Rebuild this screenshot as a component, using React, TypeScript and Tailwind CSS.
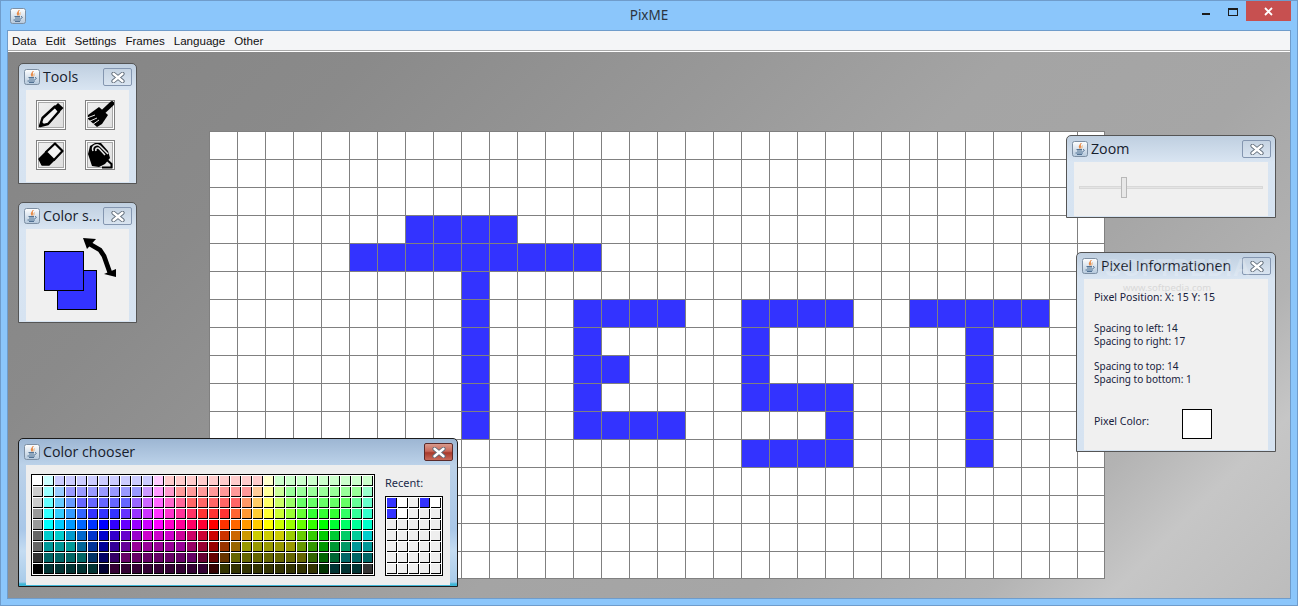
import clsx from 'clsx'
import type { ReactNode } from 'react'

const MENUS = ['Data', 'Edit', 'Settings', 'Frames', 'Language', 'Other']

const SWATCHES = [
    'fff cff ccf ccf ccf ccf ccf ccf ccf ccf ccf fcf fcc fcc fcc fcc fcc fcc fcc fcc fcc ffc cfc cfc cfc cfc cfc cfc cfc cfc cfc',
    'ccc 9ff 9cf 99f 99f 99f 99f 99f 99f 99f c9f f9f f9c f99 f99 f99 f99 f99 f99 f99 fc9 ff9 cf9 9f9 9f9 9f9 9f9 9f9 9f9 9f9 9fc',
    'ccc 6ff 6cf 69f 66f 66f 66f 66f 66f 96f c6f f6f f6c f69 f66 f66 f66 f66 f66 f96 fc6 ff6 cf6 9f6 6f6 6f6 6f6 6f6 6f6 6f9 6fc',
    '999 3ff 3cf 39f 36f 33f 33f 33f 63f 93f c3f f3f f3c f39 f36 f33 f33 f33 f63 f93 fc3 ff3 cf3 9f3 6f3 3f3 3f3 3f3 3f6 3f9 3fc',
    '999 0ff 0cf 09f 06f 03f 00f 30f 60f 90f c0f f0f f0c f09 f06 f03 f00 f30 f60 f90 fc0 ff0 cf0 9f0 6f0 3f0 0f0 0f3 0f6 0f9 0fc',
    '666 0cc 0cc 09c 06c 03c 00c 30c 60c 90c c0c c0c c0c c09 c06 c03 c00 c30 c60 c90 cc0 cc0 cc0 9c0 6c0 3c0 0c0 0c3 0c6 0c9 0cc',
    '666 099 099 099 069 039 009 309 609 909 909 909 909 909 906 903 900 930 960 990 990 990 990 990 690 390 090 093 096 099 099',
    '333 066 066 066 066 036 006 306 606 606 606 606 606 606 606 603 600 630 660 660 660 660 660 660 660 360 060 063 066 066 066',
    '000 033 033 033 033 033 003 303 303 303 303 303 303 303 303 303 300 330 330 330 330 330 330 330 330 330 030 033 033 033 333',
].map((row) => row.split(' '))

const RECENT = [
    '33f fff eee 33f fff',
    '33f fff eee eee eee',
    'eee eee eee eee eee',
    'eee eee eee eee eee',
    'eee eee eee eee eee',
    'eee eee eee eee eee',
    'eee eee eee eee eee',
].map((row) => row.split(' '))

// row -> painted columns of the "TEST" drawing
const PAINTED: Record<number, number[]> = {
    3: [7, 8, 9, 10],
    4: [5, 6, 7, 8, 9, 10, 11, 12, 13],
    5: [9],
    6: [9, 13, 14, 15, 16, 19, 20, 21, 22, 25, 26, 27, 28, 29],
    7: [9, 13, 19, 27],
    8: [9, 13, 14, 19, 27],
    9: [9, 13, 19, 20, 21, 22, 27],
    10: [9, 13, 14, 15, 16, 22, 27],
    11: [19, 20, 21, 22, 27],
}

function JavaIcon({ className }: { className?: string }) {
    return (
        <svg width="16" height="16" viewBox="0 0 16 16" className={clsx('shrink-0', className)}>
            <defs>
                <linearGradient id="javaBg" x1="0" y1="0" x2="0" y2="1">
                    <stop offset="0" stopColor="#ffffff" />
                    <stop offset="1" stopColor="#b4c8dc" />
                </linearGradient>
            </defs>
            <rect x="0.5" y="0.5" width="15" height="15" rx="2" fill="url(#javaBg)" stroke="#7d8fa3" />
            <path d="M9.5 2C7 4 10 5 8 7.5 7 6 6.5 5 9.5 2Z" fill="#e8792a" stroke="#e8792a" strokeWidth="0.6" />
            <path d="M10.5 4.5C9.5 5.5 10.5 6.5 9.5 7.5" fill="none" stroke="#f0a050" strokeWidth="0.8" />
            <path d="M4.5 8.5H10M5 10H10M11 8.5C13 8.5 12.5 10.5 10.5 10.5M3.5 12H11M5 13.5H10" fill="none" stroke="#44668a" strokeWidth="0.9" />
        </svg>
    )
}

function CloseMark() {
    return (
        <svg width="14" height="11" viewBox="0 0 14 11">
            <path d="M2.5 1.8L11.5 9.2M11.5 1.8L2.5 9.2" stroke="#5f6b78" strokeWidth="4.2" strokeLinecap="round" />
            <path d="M2.5 1.8L11.5 9.2M11.5 1.8L2.5 9.2" stroke="#ffffff" strokeWidth="2.4" strokeLinecap="round" />
        </svg>
    )
}

interface FrameProps {
    title: string
    className: string
    active?: boolean
    children: ReactNode
    contentClassName?: string
}

function InternalFrame({ title, className, active, children, contentClassName }: FrameProps) {
    return (
        <div
            className={clsx(
                'absolute box-border flex flex-col rounded-t-[5px] border',
                active
                    ? 'border-[#1b1b1b] bg-[linear-gradient(180deg,#9db6d3_0px,#bcd2e9_26px,#a9c7e8_90px,#c4dcf2_112px,#a9cbe9_143px,#3fb6d6_145px)]'
                    : 'border-[#555555] bg-[linear-gradient(180deg,#bfcfe0_0px,#d9e5f2_26px,#d6e3f1_100%)]',
                className,
            )}
        >
            <div className="flex h-[26px] shrink-0 items-center pl-[5px] pr-[4px]">
                <JavaIcon />
                <span className="ml-[3px] whitespace-nowrap font-['Open_Sans',sans-serif] text-[14.2px] leading-none text-[#17202c]">
                    {title}
                </span>
                <button
                    type="button"
                    className={clsx(
                        'ml-auto flex h-[18px] w-[29px] items-center justify-center rounded-[2px] border',
                        active
                            ? 'border-[#5a2a2a] bg-[linear-gradient(180deg,#d99a8c_0%,#c8685a_45%,#a83a2c_55%,#c86a5a_100%)]'
                            : 'border-[#8496b0] bg-[linear-gradient(180deg,#c5d3e2_0%,#d9e4f0_100%)]',
                    )}
                >
                    <CloseMark />
                </button>
            </div>
            <div className={clsx('relative mx-[7px] mb-[1px] flex-1 bg-[#f0f0f0]', contentClassName)}>{children}</div>
        </div>
    )
}

function ToolButton({ children }: { children: ReactNode }) {
    return (
        <button
            type="button"
            className="box-border h-[30px] w-[30px] border border-[#808080] bg-[linear-gradient(135deg,#f0f0f0_0%,#dedede_100%)] p-0 shadow-[inset_0_0_0_1px_#ffffff,inset_0_0_0_2px_#a8a8a8]"
        >
            <svg width="28" height="28" viewBox="1 1 28 28" className="block">
                {children}
            </svg>
        </button>
    )
}

function Swatch({ color }: { color: string }) {
    return (
        <div
            className="box-border h-[10px] w-[10px] border-b border-r border-black"
            style={{ backgroundColor: `#${color}` }}
        />
    )
}

function Canvas() {
    const cells = []
    for (let r = 0; r < 16; r++) {
        for (let c = 0; c < 32; c++) {
            const on = PAINTED[r]?.includes(c)
            cells.push(
                <div
                    key={`${r}-${c}`}
                    className={clsx(
                        'box-border border-l border-t border-[#808080]',
                        c === 31 && 'border-r',
                        r === 15 && 'border-b',
                        on ? 'bg-[#3333ff]' : 'bg-white',
                    )}
                />,
            )
        }
    }
    return <div className="grid w-[896px] grid-cols-[repeat(32,28px)] grid-rows-[repeat(16,28px)]">{cells}</div>
}

export default function App() {
    return (
        <div className="flex h-[606px] w-[1298px] flex-col overflow-hidden border border-[#6f9ccb] bg-[#8bc6fb] font-['Noto_Sans',sans-serif]">
            {/* title bar */}
            <div className="relative flex h-[29px] shrink-0 items-start justify-center">
                <JavaIcon className="absolute left-[9px] top-[7px]" />
                <span className="mt-[5px] text-[13.5px] leading-[18px] text-[#2a3440]">PixME</span>
                <div className="absolute right-[6px] top-0 flex items-start">
                    <div className="mr-[18px] mt-[12px] h-[2px] w-[8px] bg-[#1c1c1c]" />
                    <div className="mr-[8px] mt-[7px] h-[8px] w-[10px] border border-t-2 border-[#1c1c1c]" />
                    <div className="flex h-[20px] w-[45px] items-center justify-center bg-[#c75050]">
                        <svg width="9" height="9" viewBox="0 0 9 9">
                            <path d="M1 1L8 8M8 1L1 8" stroke="#fff" strokeWidth="1.8" />
                        </svg>
                    </div>
                </div>
            </div>

            {/* client area */}
            <div className="mx-[6px] mb-[6px] flex min-h-0 flex-1 flex-col border border-[#6f9ccb]">
                <div className="flex h-[20px] shrink-0 items-center gap-[9px] border-b border-[#a8a8a8] bg-[#f4f5f7] pl-[4px] font-['Liberation_Sans',sans-serif] text-[11.6px] leading-none text-[#101010]">
                    {MENUS.map((menu) => (
                        <span key={menu}>{menu}</span>
                    ))}
                </div>
                <div className="h-px shrink-0 bg-white" />

                {/* desktop */}
                <div className="relative min-h-0 flex-1 bg-[linear-gradient(135deg,#858585_0%,#8a8a8a_20%,#989898_40%,#a4a4a4_55%,#a6a6a6_70%,#b3b3b3_83%,#c6c6c6_90%,#bcbcbc_100%)] pl-[201px] pt-[79px]">
                    <Canvas />

                    <InternalFrame title="Tools" className="left-[10px] top-[11px] h-[121px] w-[119px]">
                        <div className="grid grid-cols-[30px_30px] gap-x-[19px] gap-y-[10px] px-[10px] pt-[10px]">
                            <ToolButton>
                                <polygon points="4,26 6.5,18 19,6.5 23,11.5 12,24" fill="#f2f2f2" stroke="#000" strokeWidth="2.4" strokeLinejoin="round" />
                                <polygon points="18,7 22,3 27.5,8 23,12.5" fill="#000" />
                                <polygon points="3,27 5,21 9,25" fill="#000" />
                            </ToolButton>
                            <ToolButton>
                                <path d="M27 3.5L19 11" stroke="#000" strokeWidth="4.6" strokeLinecap="round" />
                                <polygon points="14,7 23,15 17,24 12,27 3,19 3,15" fill="#000" />
                                <path d="M2 18L10 15M4 21.5L12 18M7 25L14 20" stroke="#e8e8e8" strokeWidth="1" />
                            </ToolButton>
                            <ToolButton>
                                <polygon points="3,19 10,12 18,20 13,25 6,25" fill="#000" stroke="#000" strokeWidth="1.5" strokeLinejoin="round" />
                                <polygon points="10,12 19,3.5 26.5,11 18,20" fill="#f4f4f4" stroke="#000" strokeWidth="2.2" strokeLinejoin="round" />
                            </ToolButton>
                            <ToolButton>
                                <polygon points="3,14 5,6 10,3 16,3 23,11 25,18 20,24 14,27 7,26" fill="#000" />
                                <path d="M8 11C6 6 12 3 15 6L23 14" fill="none" stroke="#e8e8e8" strokeWidth="1.5" />
                                <path d="M11 11C10 8 13 7 14.5 9L20 15" fill="none" stroke="#e8e8e8" strokeWidth="1.5" />
                                <path d="M22 20L26.5 24V27.5H17" fill="none" stroke="#000" strokeWidth="2" />
                            </ToolButton>
                        </div>
                    </InternalFrame>

                    <InternalFrame title="Color s..." className="left-[10px] top-[150px] h-[121px] w-[119px]">
                        <div className="absolute left-[31px] top-[41px] box-border h-[40px] w-[40px] border border-black bg-[#3333ff]" />
                        <div className="absolute left-[18px] top-[22px] box-border h-[40px] w-[40px] border border-black bg-[#3333ff]" />
                        <svg width="40" height="48" viewBox="0 0 40 48" className="absolute left-[54px] top-[6px]">
                            <polygon points="3,3 16,4 7,14" fill="#000" />
                            <path d="M8 8L20 15L24 21L30 38" fill="none" stroke="#000" strokeWidth="4.8" />
                            <polygon points="24,39 36,34 36,42" fill="#000" />
                        </svg>
                    </InternalFrame>

                    <InternalFrame
                        title="Color chooser"
                        active
                        className="left-[10px] top-[386px] h-[149px] w-[440px]"
                        contentClassName="flex items-end !bg-[#eeeeee] pb-[9px] pl-[5px]"
                    >
                        <div className="box-border grid grid-cols-[repeat(31,10px)] gap-px border border-black bg-white p-px">
                            {SWATCHES.flatMap((row, r) =>
                                row.map((color, c) => <Swatch key={`${r}-${c}`} color={color} />),
                            )}
                        </div>
                        <div className="ml-[10px] flex flex-col">
                            <span className="mb-[6px] text-[11px] leading-[14px] text-[#1a2a4a]">Recent:</span>
                            <div className="box-border grid grid-cols-[repeat(5,10px)] gap-px border border-black bg-white p-px">
                                {RECENT.flatMap((row, r) =>
                                    row.map((color, c) => <Swatch key={`${r}-${c}`} color={color} />),
                                )}
                            </div>
                        </div>
                    </InternalFrame>

                    <InternalFrame title="Zoom" className="left-[1058px] top-[83px] h-[83px] w-[210px]">
                        <div className="absolute left-[5px] top-[24px] h-[3px] w-[184px] border border-[#d8d8d8] bg-[#e4e4e4]" />
                        <div className="absolute left-[47px] top-[15px] box-border h-[21px] w-[6px] border border-[#b8b8b8] bg-[#e8e8e8]" />
                    </InternalFrame>

                    <InternalFrame title="Pixel Informationen" className="left-[1068px] top-[200px] h-[200px] w-[200px]">
                        <span className="absolute left-[39px] top-[4px] text-[9.5px] leading-none text-[#d8d8d8]">www.softpedia.com</span>
                        <div className="relative flex flex-col pl-[10px] pt-[12px] text-[10px] leading-[13px] text-[#17213c]">
                            <span className="text-[10.5px]">Pixel Position: X: 15 Y: 15</span>
                            <span className="mt-[18px]">Spacing to left: 14</span>
                            <span>Spacing to right: 17</span>
                            <span className="mt-[12px]">Spacing to top: 14</span>
                            <span>Spacing to bottom: 1</span>
                            <div className="mt-[23px] flex items-center">
                                <span className="w-[88px] pb-[5px] text-[10.5px]">Pixel Color:</span>
                                <div className="box-border h-[30px] w-[30px] border border-black bg-white" />
                            </div>
                        </div>
                    </InternalFrame>
                    <span className="absolute left-[1097px] top-[204px] font-['Liberation_Sans',sans-serif] text-[24px] font-bold leading-none tracking-[1px] text-white/20">
                        SOFTPEDIA
                    </span>
                </div>
            </div>
        </div>
    )
}
